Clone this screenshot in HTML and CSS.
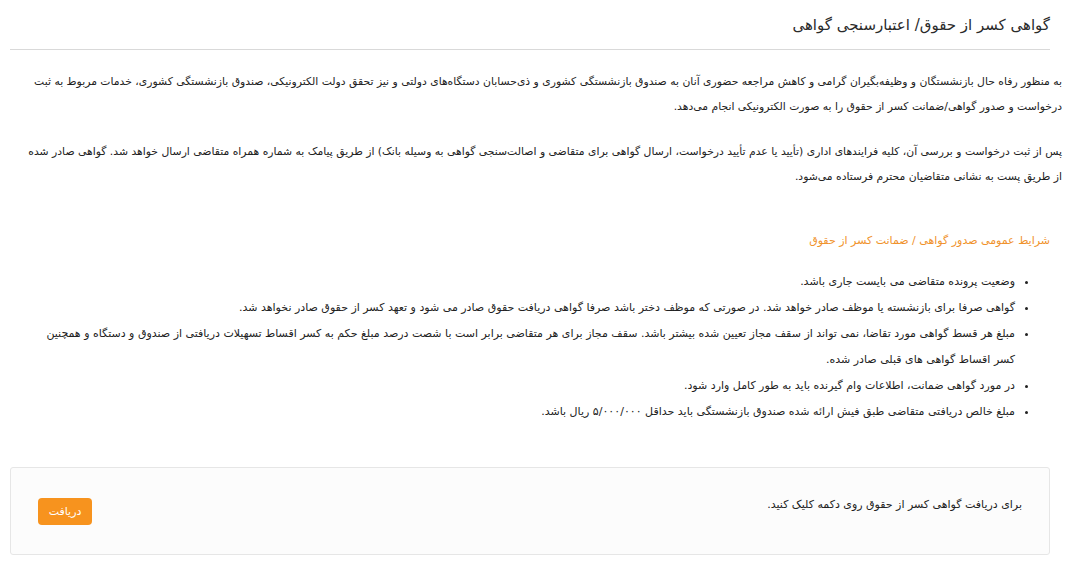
FILE: index.html
```html
<!DOCTYPE html>
<html lang="fa" dir="rtl">
<head>
<meta charset="utf-8">
<title>گواهی کسر از حقوق</title>
<link rel="stylesheet" href="styles.css">
</head>
<body>
<div class="page">
  <header class="head">
    <h1 class="title">گواهی کسر از حقوق/ اعتبارسنجی گواهی</h1>
  </header>
  <section class="intro">
    <p>به منظور رفاه حال بازنشستگان و وظیفه‌بگیران گرامی و کاهش مراجعه حضوری آنان به صندوق بازنشستگی کشوری و ذی‌حسابان دستگاه‌های دولتی و نیز تحقق دولت الکترونیکی، صندوق بازنشستگی کشوری، خدمات مربوط به ثبت درخواست و صدور گواهی/ضمانت کسر از حقوق را به صورت الکترونیکی انجام می‌دهد.</p>
    <p>پس از ثبت درخواست و بررسی آن، کلیه فرایندهای اداری (تأیید یا عدم تأیید درخواست، ارسال گواهی برای متقاضی و اصالت‌سنجی گواهی به وسیله بانک) از طریق پیامک به شماره همراه متقاضی ارسال خواهد شد. گواهی صادر شده از طریق پست به نشانی متقاضیان محترم فرستاده می‌شود.</p>
  </section>
  <section class="terms">
    <h2 class="terms-title">شرایط عمومی صدور گواهی / ضمانت کسر از حقوق</h2>
    <ul class="terms-list">
      <li>وضعیت پرونده متقاضی می بایست جاری باشد.</li>
      <li>گواهی صرفا برای بازنشسته یا موظف صادر خواهد شد. در صورتی که موظف دختر باشد صرفا گواهی دریافت حقوق صادر می شود و تعهد کسر از حقوق صادر نخواهد شد.</li>
      <li>مبلغ هر قسط گواهی مورد تقاضا، نمی تواند از سقف مجاز تعیین شده بیشتر باشد. سقف مجاز برای هر متقاضی برابر است با شصت درصد مبلغ حکم به کسر اقساط تسهیلات دریافتی از صندوق و دستگاه و همچنین کسر اقساط گواهی های قبلی صادر شده.</li>
      <li>در مورد گواهی ضمانت، اطلاعات وام گیرنده باید به طور کامل وارد شود.</li>
      <li>مبلغ خالص دریافتی متقاضی طبق فیش ارائه شده صندوق بازنشستگی باید حداقل ۵/۰۰۰/۰۰۰ ریال باشد.</li>
    </ul>
  </section>
  <section class="action">
    <p class="action-text">برای دریافت گواهی کسر از حقوق روی دکمه کلیک کنید.</p>
    <button class="btn" type="button">دریافت</button>
  </section>
</div>
</body>
</html>
```

FILE: styles.css
```css
* { box-sizing: border-box; }
html, body { margin: 0; padding: 0; background: #fff; }
body {
  font-family: "DejaVu Sans", "Noto Sans", sans-serif;
  color: #222;
  direction: rtl;
}
.page { width: 1080px; }
.head {
  width: 1040px;
  margin: 0 30px 0 10px;
  padding: 12px 0 11px;
  border-bottom: 1px solid #d9d9d9;
}
.title {
  margin: 0;
  font-size: 15px;
  font-weight: normal;
  line-height: 26px;
  color: #2a2a2a;
}
.intro {
  padding: 19px 18px 0 18px;
}
.intro p {
  margin: 0 0 20px 0;
  font-size: 10.8px;
  line-height: 25px;
}
.terms {
  padding: 21px 30px 0 30px;
}
.terms-title {
  margin: 0;
  font-size: 11px;
  font-weight: normal;
  line-height: 22px;
  color: #f0922b;
}
.terms-list {
  margin: 17px 0 0 0;
  padding: 0 35px 0 0;
  font-size: 11px;
  line-height: 26px;
}
.action {
  width: 1040px;
  margin: 42px 30px 0 10px;
  border: 1px solid #e6e6e6;
  border-radius: 3px;
  background: #fcfcfc;
  padding: 24px 27px 29px 27px;
  display: flex;
  justify-content: space-between;
  align-items: flex-start;
}
.action-text {
  margin: 0;
  font-size: 11px;
  line-height: 26px;
}
.btn {
  margin-top: 6px;
  font-family: inherit;
  font-size: 11px;
  color: #fff;
  background: #f7931e;
  border: none;
  border-radius: 4px;
  width: 54px;
  height: 27px;
  padding: 0;
}
```
